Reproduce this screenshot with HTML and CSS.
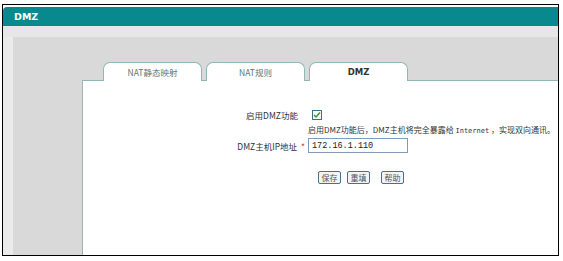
FILE: index.html
```html
<!DOCTYPE html>
<html lang="zh-CN">
<head>
<meta charset="UTF-8" />
<title>DMZ</title>
<link rel="stylesheet" href="styles.css">
</head>
<body>
  <div class="frame">
    <div class="title">DMZ</div>
    <div class="band"></div>
    <div class="main">
      <div class="side"></div>
      <div class="work">
        <div class="tabs">
          <div class="tab">NAT静态映射</div>
          <div class="tab">NAT规则</div>
          <div class="tab active">DMZ</div>
        </div>
        <div class="panel">
          <div class="form">
            <label class="label">启用DMZ功能</label>
            <div class="field">
              <span class="check">
                <svg width="8" height="8" viewBox="0 0 8 8"><path d="M1 4 L3 6 L7 1.5" fill="none" stroke="#2e9a2e" stroke-width="1.4"/></svg>
              </span>
            </div>
            <div class="label"></div>
            <div class="hint">启用DMZ功能后，DMZ主机将完全暴露给 <span class="mono">Internet</span> ，实现双向通讯。</div>
            <label class="label star-row">DMZ主机IP地址 <span class="star">*</span></label>
            <div class="field">
              <input class="ip" type="text" value="172.16.1.110">
            </div>
            <div class="label"></div>
            <div class="buttons">
              <button class="btn">保存</button>
              <button class="btn">重填</button>
              <button class="btn help">帮助</button>
            </div>
          </div>
        </div>
      </div>
    </div>
  </div>
</body>
</html>
```

FILE: styles.css
```css
body {
  margin: 0;
  background: #fff;
  font-family: "Noto Sans CJK SC", "DejaVu Sans", sans-serif;
  color: #333;
}
.frame {
  margin: 4px 4px 0 2px;
  width: 555px;
  height: 250px;
  border: 1px solid #000;
  display: flex;
  flex-direction: column;
  overflow: hidden;
}
.title {
  margin-top: 2px;
  height: 19px;
  background: #07898d;
  border-radius: 4px 0 0 0;
  color: #fff;
  font-family: "DejaVu Sans", sans-serif;
  font-weight: 700;
  font-size: 9.5px;
  line-height: 19px;
  padding-left: 11px;
}
.band {
  height: 11px;
  background: #e7e7e7;
}
.main {
  flex: 1;
  display: flex;
  min-width: 0;
}
.side {
  width: 10px;
  flex-shrink: 0;
  background: #ebebeb;
}
.work {
  flex: 1;
  min-width: 0;
  background: #d9d9d9;
  padding: 25px 0 0 69px;
  display: flex;
  flex-direction: column;
}
.tabs {
  display: flex;
  gap: 4px;
  margin-left: 21px;
  position: relative;
  z-index: 1;
  margin-bottom: -1px;
}
.tab {
  width: 97px;
  height: 18px;
  border: 1px solid #8fb8b5;
  border-bottom: none;
  border-radius: 7px 7px 0 0;
  background: #fff;
  text-align: center;
  font-size: 8.5px;
  line-height: 18px;
  color: #5d7777;
}
.tab.active {
  color: #333;
  font-weight: 700;
  font-family: "DejaVu Sans", sans-serif;
}
.panel {
  flex: 1;
  background: #fff;
  border-left: 1px solid #9fb5b2;
  border-top: 1px solid #8fb8b5;
  padding-top: 26px;
}
.form {
  display: grid;
  grid-template-columns: 225px 1fr;
  align-items: center;
  font-size: 8.5px;
}
.label {
  text-align: right;
  padding-right: 10px;
  color: #333;
}
.star-row {
  padding-right: 3px;
}
.star {
  color: #e03030;
  margin-left: 2px;
}
.field {
  height: 15px;
  display: flex;
  align-items: center;
}
.check {
  margin-left: 4px;
  width: 8px;
  height: 8px;
  border: 1px solid #3d6f86;
  display: flex;
  align-items: center;
  justify-content: center;
  background: #fafafa;
}
.hint {
  height: 16px;
  line-height: 16px;
  white-space: nowrap;
  font-size: 8px;
  min-width: 0;
}
.mono {
  font-family: "DejaVu Sans Mono", monospace;
  font-size: 7px;
}
.ip {
  width: 92px;
  height: 13px;
  padding: 0 3px;
  border: 1px solid #7f9db9;
  font-family: "Liberation Mono", monospace;
  font-size: 8.5px;
  color: #222;
}
.buttons {
  padding: 18px 0 0 10px;
  display: flex;
  gap: 6px;
}
.btn {
  width: 23px;
  height: 13px;
  padding: 0;
  border: 1px solid #4d6f86;
  border-radius: 2px;
  background: #f2f4f6;
  font-family: "Noto Sans CJK SC", sans-serif;
  font-size: 8px;
  line-height: 11px;
  color: #555;
}
.btn.help {
  margin-left: 5px;
}
```
